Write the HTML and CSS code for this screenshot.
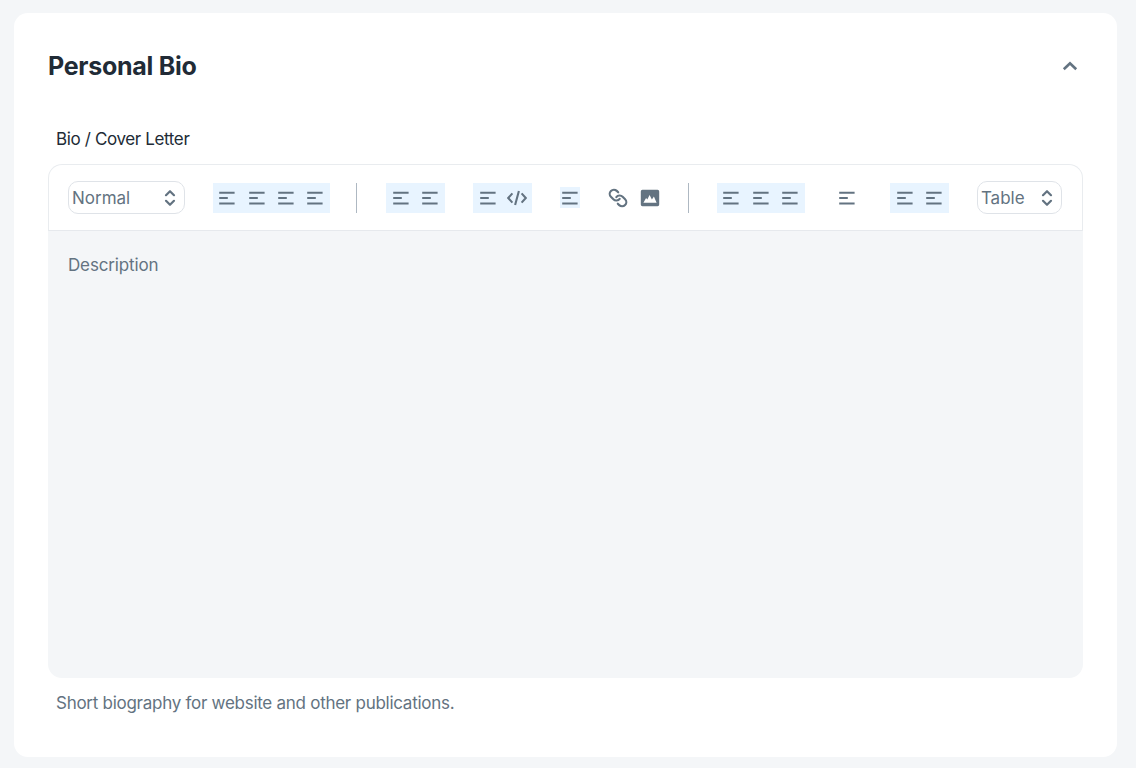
FILE: index.html
```html
<!DOCTYPE html>
<html lang="en">
<head>
<meta charset="utf-8">
<title>Personal Bio</title>
<link rel="stylesheet" href="styles.css">
</head>
<body>
<svg class="defs" width="0" height="0" aria-hidden="true">
  <symbol id="al" viewBox="0 0 20 20"><path d="M2.200 4.800h15.400M2.200 10.100h8.600M2.200 15.500h15.400" fill="none" stroke="currentColor" stroke-width="2"/></symbol>
  <symbol id="updown" viewBox="0 0 12 20"><path d="M2 7.200 6 3.200l4 4M2 12.800l4 4 4-4" fill="none" stroke="currentColor" stroke-width="2.200" stroke-linecap="round" stroke-linejoin="round"/></symbol>
</svg>
<main class="card">
  <header class="card-head">
    <h2 class="title">Personal Bio</h2>
    <svg class="chevron" width="16" height="10" viewBox="0 0 16 10"><path d="M1.800 8.300 8 2.200l6.200 6.100" fill="none" stroke="currentColor" stroke-width="2.600"/></svg>
  </header>
  <label class="label">Bio / Cover Letter</label>
  <section class="editor">
    <div class="toolbar">
      <div class="select select-normal"><span>Normal</span><svg class="updown"><use href="#updown"/></svg></div>
      <div class="group group-wide tint">
        <svg class="ic"><use href="#al"/></svg><svg class="ic"><use href="#al"/></svg><svg class="ic"><use href="#al"/></svg><svg class="ic"><use href="#al"/></svg>
      </div>
      <div class="sep sep-first"></div>
      <div class="group tint">
        <svg class="ic"><use href="#al"/></svg><svg class="ic"><use href="#al"/></svg>
      </div>
      <div class="group tint">
        <svg class="ic"><use href="#al"/></svg>
        <svg class="ic" viewBox="0 0 20 20"><path d="M5.400 5.400 1.200 10l4.200 4.600M14.600 5.400l4.200 4.600-4.200 4.600M11.900 3 8.100 17" fill="none" stroke="currentColor" stroke-width="2.100"/></svg>
      </div>
      <div class="single tint"><svg class="ic"><use href="#al"/></svg></div>
      <div class="pair">
        <svg class="ic" viewBox="0 0 24 24"><g transform="translate(24 0) scale(-1 1)" fill="none" stroke="currentColor" stroke-width="2.600" stroke-linecap="round" stroke-linejoin="round"><path d="M10 13a5 5 0 0 0 7.540.54l3-3a5 5 0 0 0-7.070-7.070l-1.720 1.710"/><path d="M14 11a5 5 0 0 0-7.540-.54l-3 3a5 5 0 0 0 7.070 7.070l1.710-1.710"/></g></svg>
        <svg class="ic" viewBox="0 0 20 20"><path fill-rule="evenodd" d="M2.400 1.800h15.200a1.600 1.600 0 0 1 1.600 1.600v13.200a1.600 1.600 0 0 1-1.600 1.600H2.400a1.600 1.600 0 0 1-1.600-1.600V3.400a1.600 1.600 0 0 1 1.600-1.600ZM3.400 14.800h13.200l-2.700-6.200-2 2.800-2.300-4.400-2.300 4.400-1.200-1.300Z" fill="currentColor"/></svg>
      </div>
      <div class="sep"></div>
      <div class="group group-wide tint">
        <svg class="ic"><use href="#al"/></svg><svg class="ic"><use href="#al"/></svg><svg class="ic"><use href="#al"/></svg>
      </div>
      <div class="group">
        <svg class="ic"><use href="#al"/></svg>
      </div>
      <div class="group tint">
        <svg class="ic"><use href="#al"/></svg><svg class="ic"><use href="#al"/></svg>
      </div>
      <div class="select select-table"><span>Table</span><svg class="updown"><use href="#updown"/></svg></div>
    </div>
    <div class="body"><p class="placeholder">Description</p></div>
  </section>
  <p class="help">Short biography for website and other publications.</p>
</main>
</body>
</html>
```
FILE: styles.css
```css
* { box-sizing: border-box; }
html, body { margin: 0; height: 100%; }
body {
  background: #f4f6f8;
  padding: 13px 19px 11px 14px;
  font-family: Inter, "Liberation Sans", sans-serif;
  color: #212b36;
  overflow: hidden;
}
.defs { position: absolute; }
.card {
  background: #fff;
  border-radius: 14px;
  height: 744px;
  padding: 35px 34px 42px;
  display: flex;
  flex-direction: column;
}
.card-head {
  display: flex;
  align-items: center;
  justify-content: space-between;
  height: 36px;
  padding-right: 5px;
}
.title {
  margin: 0;
  font-size: 25px;
  line-height: 36px;
  font-weight: 700;
  letter-spacing: -0.27px;
}
.chevron { color: #637381; display: block; }
.label {
  display: block;
  margin-top: 43px;
  padding-left: 8px;
  font-size: 17px;
  line-height: 24px;
  letter-spacing: -0.37px;
  color: #212b36;
}
.editor {
  margin-top: 13px;
  flex: 1;
  display: flex;
  flex-direction: column;
  border-radius: 14px;
  overflow: hidden;
  background: #f4f6f8;
}
.toolbar {
  display: flex;
  align-items: center;
  justify-content: space-between;
  height: 67px;
  padding: 0 20px 0 19px;
  background: #fff;
  border: 1px solid #e9ecef;
  border-bottom-color: #e6e9ed;
  border-radius: 14px 14px 0 0;
}
.select {
  display: flex;
  align-items: center;
  justify-content: space-between;
  flex: none;
  height: 33px;
  padding: 0 8px 0 3px;
  border: 1px solid #dfe3e8;
  border-radius: 10px;
  font-size: 17px;
  color: #637381;
}
.select-normal { width: 117px; }
.select-table { width: 85px; }
.updown { width: 12px; height: 20px; color: #637381; }
.group, .single, .pair { display: flex; align-items: center; flex: none; }
.group { height: 30px; padding: 0 5px; gap: 9px; }
.group-wide { padding: 0 4.5px; gap: 9.33px; }
.single { height: 21px; }
.pair { gap: 12px; margin-left: 1px; }
.tint { background: #e8f4ff; }
.ic { width: 20px; height: 20px; color: #637381; flex: none; }
.sep { width: 1px; height: 30px; background: #aeb8c2; flex: none; }
.sep-first { margin: 0 1px 0 -1px; }
.body { flex: 1; padding: 24px 20px; }
.placeholder {
  margin: 0;
  font-size: 17px;
  line-height: 20px;
  color: #637381;
  letter-spacing: -0.15px;
}
.help {
  margin: 13px 0 0;
  padding-left: 8px;
  font-size: 17px;
  line-height: 24px;
  color: #637381;
  letter-spacing: -0.27px;
}
```
